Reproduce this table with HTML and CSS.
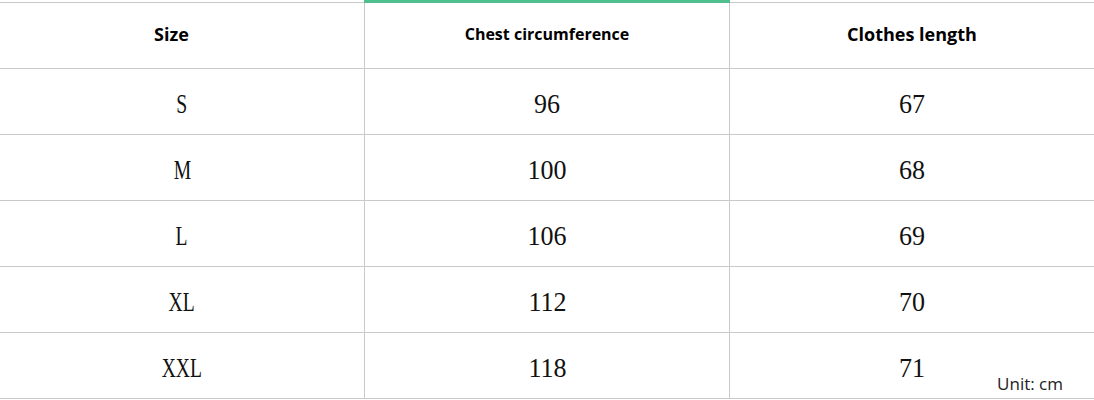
FILE: index.html
```html
<!DOCTYPE html>
<html lang="en">
<head>
<meta charset="utf-8">
<title>Size chart</title>
<link rel="stylesheet" href="styles.css">
</head>
<body>
<div class="chart">
  <div class="cell head head-size">Size</div>
  <div class="cell head head-active">Chest circumference</div>
  <div class="cell head head-length">Clothes length</div>

  <div class="cell"><span class="sz">S</span></div><div class="cell"><span class="num">96</span></div><div class="cell"><span class="num">67</span></div>
  <div class="cell"><span class="sz">M</span></div><div class="cell"><span class="num">100</span></div><div class="cell"><span class="num">68</span></div>
  <div class="cell"><span class="sz">L</span></div><div class="cell"><span class="num">106</span></div><div class="cell"><span class="num">69</span></div>
  <div class="cell"><span class="sz">XL</span></div><div class="cell"><span class="num">112</span></div><div class="cell"><span class="num">70</span></div>
  <div class="cell"><span class="sz">XXL</span></div><div class="cell"><span class="num">118</span></div><div class="cell last"><span class="num">71</span><span class="unit">Unit: cm</span></div>
</div>
</body>
</html>
```
FILE: styles.css
```css
html, body {
  margin: 0;
  padding: 0;
  background: #fff;
}

.chart {
  padding-top: 2px;
  display: grid;
  grid-template-columns: 365px 365px 1fr;
  grid-template-rows: 67px repeat(5, 66px);
  color: #111;
}

.cell {
  box-sizing: border-box;
  border-bottom: 1px solid #c9c9c9;
  display: flex;
  align-items: center;
  justify-content: center;
  font-family: "Liberation Serif", "DejaVu Serif", serif;
  font-size: 28px;
  padding-top: 5px;
}

.cell:nth-child(3n+1),
.cell:nth-child(3n+2) {
  border-right: 1px solid #c9c9c9;
}

.sz {
  display: inline-block;
  transform: scaleX(0.7);
}

.num {
  display: inline-block;
  transform: scaleX(0.93);
}

.head {
  border-top: 1px solid #c9c9c9;
  font-family: "Open Sans", "Noto Sans", sans-serif;
  font-weight: 700;
  font-size: 18px;
  padding-top: 0;
  padding-bottom: 3px;
  color: #000;
}

.head-size {
  padding-right: 21px;
}

.head-active {
  position: relative;
  font-size: 16px;
}

.head-active::before {
  content: "";
  position: absolute;
  top: -3px;
  left: -1px;
  right: -1px;
  height: 3px;
  background: #4fbf8e;
}

.last {
  position: relative;
}

.unit {
  position: absolute;
  right: 31px;
  bottom: 3px;
  font-family: "Open Sans", "Noto Sans", sans-serif;
  font-size: 17px;
  color: #222;
}
```
